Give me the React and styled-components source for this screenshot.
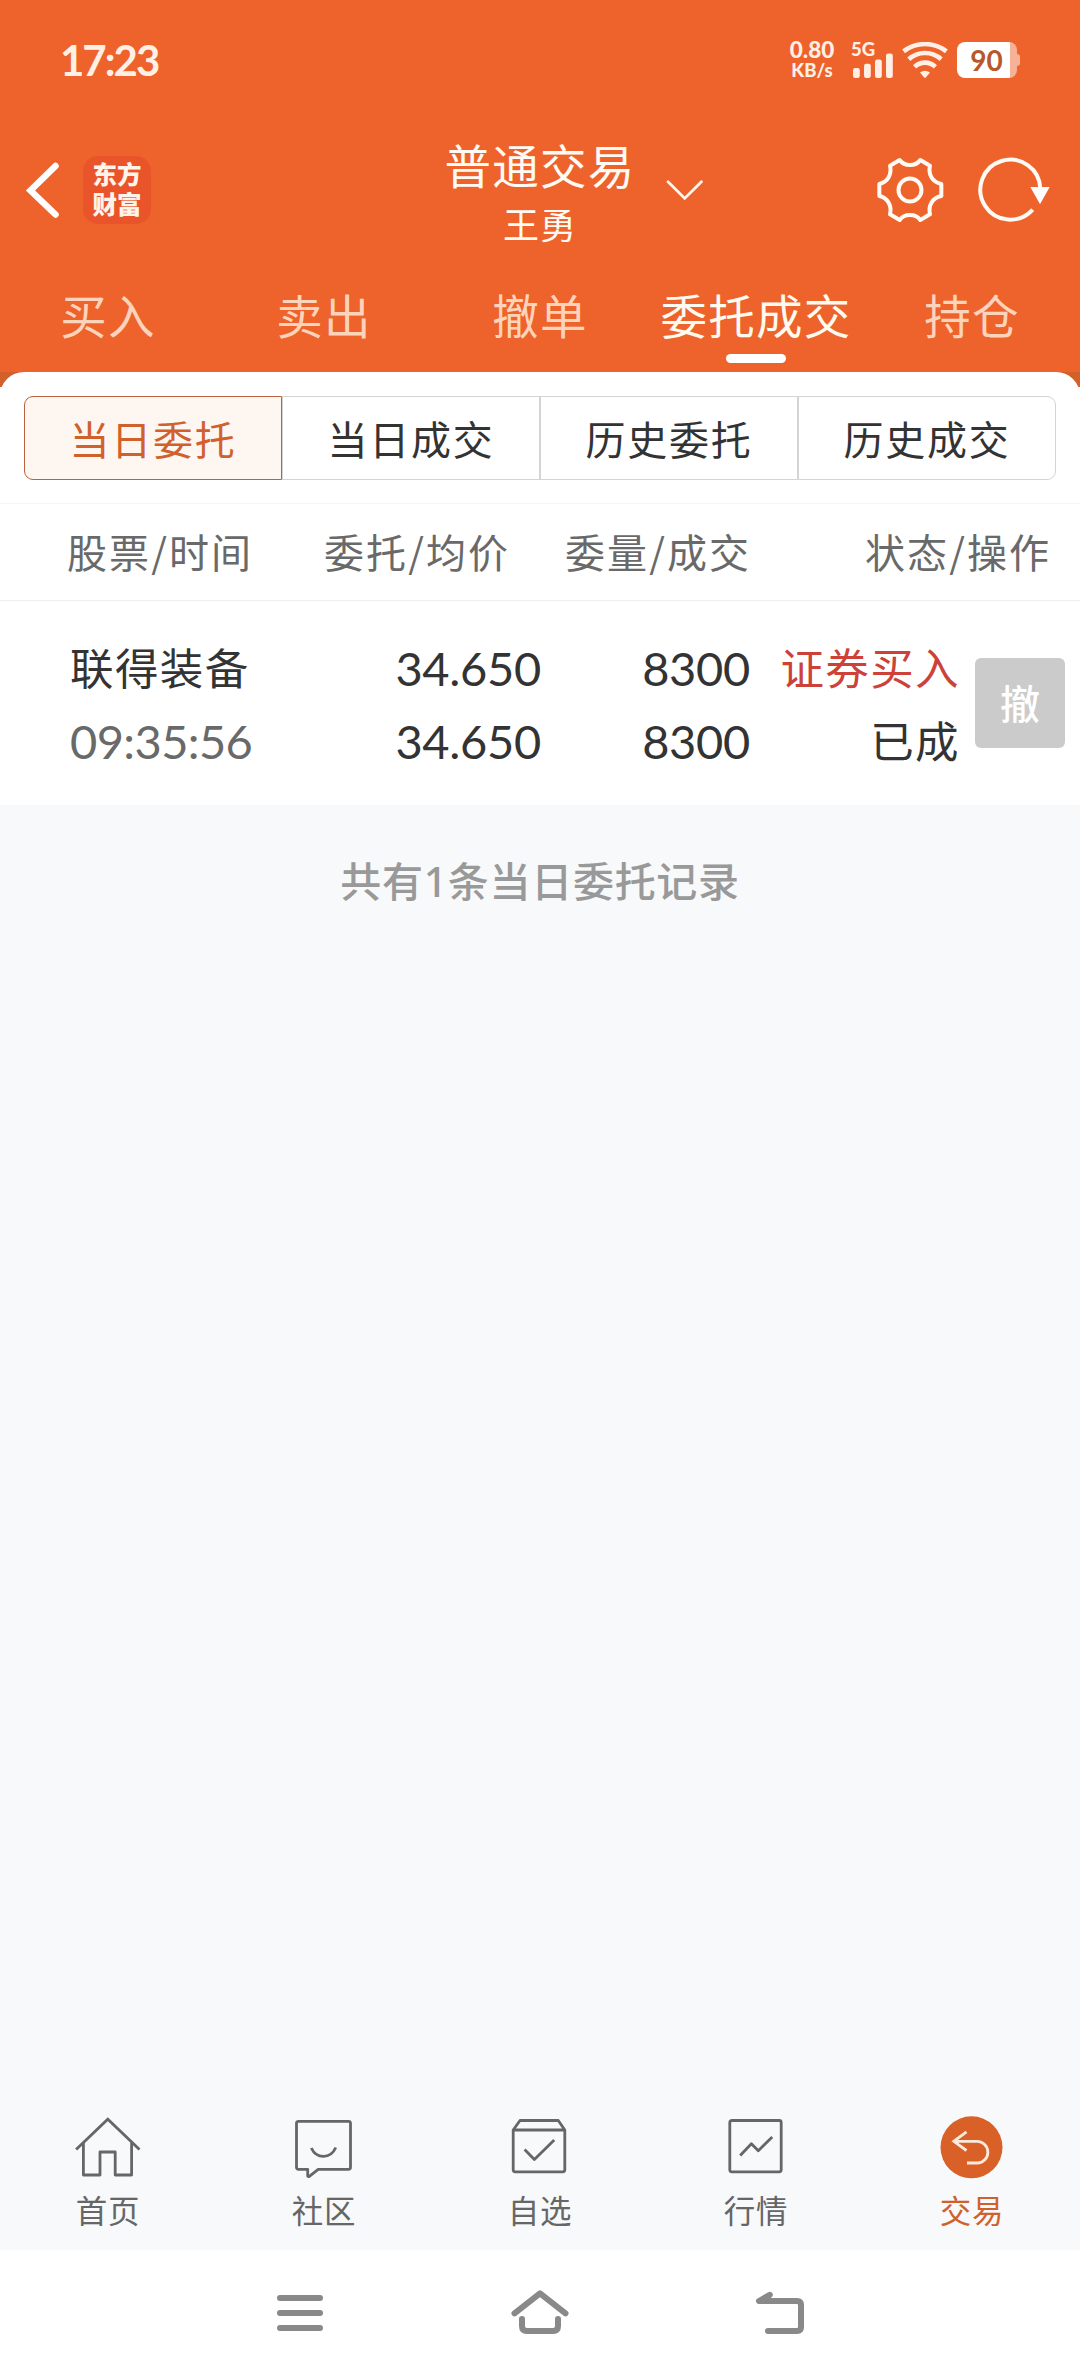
import React, { useState } from 'react';
import styled, { createGlobalStyle, ThemeProvider } from 'styled-components';

const theme = {
  colors: {
    primary: '#ed632b',
    primaryDark: '#d2602b',
    active: '#d0612d',
    activeBg: '#fdf6f1',
    text: '#333333',
    textLight: '#696969',
    muted: '#999999',
    buy: '#cc4238',
    page: '#f8f9fb',
    line: '#eeeeee',
  },
  fonts: {
    text: "'Noto Sans CJK SC', sans-serif",
    number: "Lato, 'Noto Sans CJK SC', sans-serif",
    mixed: "'Noto Sans', 'Noto Sans CJK SC', sans-serif",
  },
};

const GlobalStyle = createGlobalStyle`
  * {
    box-sizing: border-box;
  }

  body {
    margin: 0;
    background: ${theme.colors.page};
    font-family: ${theme.fonts.text};
    color: ${theme.colors.text};
  }

  button {
    margin: 0;
    padding: 0;
    border: 0;
    background: none;
    font: inherit;
    color: inherit;
  }

  svg {
    display: block;
    flex: none;
  }
`;

const Screen = styled.div`
  display: flex;
  flex-direction: column;
  width: 1080px;
  height: 2376px;
  overflow: hidden;
`;

const Header = styled.header`
  height: 372px;
  background: ${props => props.theme.colors.primary};
  color: #fffaf3;
`;

const StatusBar = styled.div`
  display: flex;
  align-items: center;
  height: 120px;
  padding: 0 60px;
  color: #ffefe5;
`;

const Clock = styled.span`
  font-family: ${props => props.theme.fonts.number};
  font-weight: 700;
  font-size: 42px;
  line-height: 50px;
  letter-spacing: -2px;
  margin-right: auto;
`;

const NetSpeed = styled.div`
  display: flex;
  flex-direction: column;
  align-items: center;
  width: 48px;
  margin-right: 15px;
  font-family: ${props => props.theme.fonts.number};
  font-weight: 900;
  line-height: 20px;
`;

const SpeedValue = styled.span`
  font-size: 22.5px;
`;

const SpeedUnit = styled.span`
  font-size: 18.5px;
`;

const Signal = styled.div`
  display: flex;
  flex-direction: column;
  width: 43px;
  height: 36px;
  margin-right: 8px;
`;

const SignalLabel = styled.span`
  height: 11px;
  font-family: ${props => props.theme.fonts.number};
  font-weight: 900;
  font-size: 18.5px;
  line-height: 14px;
`;

const Battery = styled.div`
  display: flex;
  align-items: center;
  margin-left: 9px;
`;

const BatteryBody = styled.div`
  display: flex;
  align-items: center;
  justify-content: center;
  width: 60px;
  height: 36px;
  padding-right: 1px;
  border-radius: 8px;
  background: linear-gradient(to right, #ffffff 53px, #f7b196 53px);
  color: #b9562b;
  font-family: ${props => props.theme.fonts.number};
  font-weight: 700;
  font-size: 28px;
  line-height: 34px;
`;

const BatteryTip = styled.div`
  width: 3px;
  height: 12px;
  border-radius: 0 3px 3px 0;
  background: #f7b196;
`;

const TitleBar = styled.div`
  display: grid;
  grid-template-columns: 1fr auto 1fr;
  height: 140px;
`;

const TitleLeft = styled.div`
  display: flex;
  align-items: center;
  gap: 23px;
  padding-left: 24px;
`;

const Logo = styled.div`
  display: grid;
  place-content: center;
  width: 68px;
  height: 68px;
  padding-bottom: 3px;
  border-radius: 15px;
  background: #ea542a;
  color: #fff3ea;
  font-weight: 900;
  font-size: 24.5px;
  line-height: 29.5px;
  text-align: center;
`;

const TitleCenter = styled.div`
  display: flex;
  flex-direction: column;
  align-items: center;
  gap: 7px;
  padding-top: 14px;
`;

const Title = styled.h1`
  margin: 0;
  font-weight: 400;
  font-size: 46.5px;
  line-height: 60px;
  letter-spacing: 1.3px;
`;

const Account = styled.span`
  font-size: 36px;
  line-height: 44px;
  letter-spacing: 1px;
`;

const TitleRight = styled.div`
  display: flex;
  align-items: center;
  padding: 0 29px 0 29px;
`;

const TitleActions = styled.div`
  display: flex;
  gap: 32px;
  margin-left: auto;
`;

const TradeTabs = styled.nav`
  display: grid;
  grid-template-columns: repeat(5, 1fr);
  height: 112px;
  padding-top: 24px;
`;

const TradeTab = styled.button`
  display: flex;
  flex-direction: column;
  align-items: center;
  gap: 10px;
  font-size: 46.5px;
  line-height: 60px;
  letter-spacing: 1.3px;
  white-space: nowrap;
  color: ${props => (props.$active ? '#fffaf0' : '#fdd3bb')};

  &::after {
    content: '';
    width: 60px;
    height: 9px;
    border-radius: 5px;
    background: ${props => (props.$active ? '#ffffff' : 'transparent')};
  }
`;

const SheetTop = styled.div`
  height: 15px;
  overflow: hidden;
  background: ${props => props.theme.colors.primaryDark};

  &::before {
    content: '';
    display: block;
    height: 30px;
    border-radius: 24px 24px 0 0;
    background: #ffffff;
  }
`;

const Sheet = styled.section`
  background: #ffffff;
`;

const Segments = styled.div`
  display: grid;
  grid-template-columns: repeat(4, 1fr);
  height: 116px;
  padding: 9px 24px 23px;
`;

const Segment = styled.button`
  border: 1px solid ${props => (props.$active ? '#b8623f' : '#d4d4d4')};
  background: ${props => (props.$active ? props.theme.colors.activeBg : '#ffffff')};
  color: ${props => (props.$active ? props.theme.colors.active : props.theme.colors.text)};
  font-size: 40px;
  line-height: 60px;
  letter-spacing: 1.8px;

  &:first-child {
    border-radius: 9px 0 0 9px;
  }

  &:last-child {
    border-radius: 0 9px 9px 0;
  }
`;

const Columns = styled.div`
  display: grid;
  grid-template-columns: 67px 257px 241px 300px 1fr;
  height: 98px;
  border-top: 1px solid #f5f5f5;
  border-bottom: 1px solid ${props => props.theme.colors.line};
  color: ${props => props.theme.colors.textLight};
  font-size: 40px;
  line-height: 95px;
  letter-spacing: 2.1px;
  white-space: nowrap;

  span:first-child {
    grid-column: 2;
  }
`;

const Order = styled.div`
  display: grid;
  grid-template-columns: 220px 251px 209px 209px 1fr;
  align-items: center;
  height: 204px;
  padding: 0 15px 0 70px;
`;

const Cell = styled.div`
  display: flex;
  flex-direction: column;
  align-items: ${props => (props.$left ? 'flex-start' : 'flex-end')};
  white-space: nowrap;
`;

const OrderText = styled.span`
  height: 73px;
  font-size: 43.5px;
  line-height: 73px;
  letter-spacing: 1.4px;
  margin-right: -1px;
  color: ${props => (props.$buy ? props.theme.colors.buy : props.theme.colors.text)};
`;

const OrderNumber = styled.span`
  height: 73px;
  font-family: ${props => props.theme.fonts.number};
  font-size: 47px;
  line-height: 76px;
  letter-spacing: ${props => (props.$time ? '-0.6px' : '-0.3px')};
  color: ${props => (props.$time ? props.theme.colors.textLight : props.theme.colors.text)};
`;

const CancelButton = styled.button`
  justify-self: end;
  width: 90px;
  height: 90px;
  padding-bottom: 3px;
  border-radius: 6px;
  background: #cbcbcb;
  color: #ffffff;
  font-size: 40px;
  font-weight: 500;
`;

const Summary = styled.p`
  flex: 1;
  margin: 0;
  padding-top: 48px;
  text-align: center;
  font-family: ${props => props.theme.fonts.mixed};
  font-size: 41px;
  font-weight: 500;
  line-height: 56px;
  letter-spacing: 0.7px;
  color: ${props => props.theme.colors.muted};
`;

const TabBar = styled.nav`
  display: grid;
  grid-template-columns: repeat(5, 1fr);
  height: 150px;
  padding-top: 12px;
`;

const TabItem = styled.button`
  display: flex;
  flex-direction: column;
  align-items: center;
  font-size: 31.5px;
  line-height: 50px;
  letter-spacing: 0.8px;
  color: ${props => (props.$active ? props.theme.colors.active : '#666666')};
`;

const SystemNav = styled.div`
  display: grid;
  grid-template-columns: repeat(3, 240px);
  justify-content: center;
  justify-items: center;
  height: 126px;
  padding-top: 27px;
  background: #ffffff;
`;

const LineIcon = ({ children }) => (
  <svg
    width="72"
    height="72"
    viewBox="0 0 72 72"
    fill="none"
    stroke="currentColor"
    strokeWidth="2.8"
    strokeLinejoin="round"
  >
    {children}
  </svg>
);

const HomeIcon = () => (
  <LineIcon>
    <path d="M4.1 37.5 35.8 7.3 67.5 37.5" strokeLinejoin="miter" />
    <path d="M11.4 31V63H28V40H43.2V63H59.6V31" />
  </LineIcon>
);

const CommunityIcon = () => (
  <LineIcon>
    <path d="M10.5 9.3H60.5Q62.5 9.3 62.5 11.3V55.3Q62.5 57.3 60.5 57.3H30.2L21 64.6Q19.7 65 19.7 63.5V57.3H10.5Q8.5 57.3 8.5 55.3V11.3Q8.5 9.3 10.5 9.3Z" />
    <path d="M23.3 36C28.5 47.3 42.5 47.3 47.8 35.5" />
  </LineIcon>
);

const WatchlistIcon = () => (
  <LineIcon>
    <path d="M9.2 18 16 8.5H54.3L60.8 18V57.8Q60.8 59.8 58.8 59.8H11.2Q9.2 59.8 9.2 57.8ZM9.2 18H60.8" />
    <path d="M20.6 37.5 30.4 47.5 50.2 28" />
  </LineIcon>
);

const MarketIcon = () => (
  <LineIcon>
    <rect x="9.8" y="8.5" width="51.4" height="51.3" rx="2" />
    <path d="M20.2 43.5 31.4 31.7 38.3 38.7 52.2 25" />
  </LineIcon>
);

const TradeIcon = () => (
  <LineIcon>
    <circle cx="35.5" cy="35.3" r="31" fill="#d96027" stroke="none" />
    <path
      d="M30.5 19.8 17.8 29.3 30.5 38.5M17.8 29.3H42A10.9 10.9 0 0 1 42 51H31"
      stroke="#fdeadd"
      strokeLinejoin="miter"
    />
  </LineIcon>
);

const SignalBars = () => (
  <svg width="43" height="25" viewBox="0 0 43 25" fill="currentColor">
    <rect x="2" y="15" width="6.8" height="10" rx="2.2" />
    <rect x="13" y="10.7" width="6.8" height="14.3" rx="2.2" />
    <rect x="24" y="6.5" width="6.8" height="18.5" rx="2.2" />
    <rect x="35" y="0.5" width="6.8" height="24.5" rx="2.2" />
  </svg>
);

const WifiIcon = () => (
  <svg width="46" height="36" viewBox="0 0 46 36" fill="none" stroke="currentColor" strokeWidth="4.6">
    <path d="M1.6 9.4C14 -0.4 32 -0.4 44.4 9.4" />
    <path d="M6.8 17.2C16 9 30 9 39.2 17.2" />
    <path d="M12.6 24.8C18.4 19.2 27.6 19.2 33.4 24.8" />
    <path d="M18 30.4Q23 27.2 28 30.4L23.8 35.4Q23 36 22.2 35.4Z" fill="currentColor" stroke="none" />
  </svg>
);

const BackIcon = () => (
  <svg width="36" height="60" viewBox="0 0 36 60" fill="none" stroke="#ffffff" strokeWidth="6.5" strokeLinecap="round">
    <path d="M31.5 6 6.5 30.5 31.5 54.5" />
  </svg>
);

const ChevronIcon = () => (
  <svg width="38" height="24" viewBox="0 0 38 24" fill="none" stroke="currentColor" strokeWidth="2.8" strokeLinecap="round">
    <path d="M3 3.8 19.7 20.4 36.4 3.8" />
  </svg>
);

const GearIcon = () => (
  <svg width="70" height="70" viewBox="46 45 210 210" fill="none" stroke="currentColor" strokeWidth="12" strokeLinejoin="round">
    <path d="M120 60C134 80 168 80 182 60L211 77C205 103 217 126 245 132V168C217 174 205 197 211 223L182 240C168 220 134 220 120 240L91 223C97 197 85 174 59 168V132C85 126 97 103 91 77Z" />
    <circle cx="151" cy="150" r="34.5" />
  </svg>
);

const RefreshIcon = () => (
  <svg width="74" height="70" viewBox="352 45 222 210" fill="none" stroke="currentColor" strokeWidth="12">
    <path d="M519 209A90 90 0 1 1 542 146" />
    <path d="M512 141H570L541 193Z" fill="#ffffff" stroke="none" />
  </svg>
);

const tradeTabs = ['买入', '卖出', '撤单', '委托成交', '持仓'];

const segments = ['当日委托', '当日成交', '历史委托', '历史成交'];

const orders = [
  {
    name: '联得装备',
    time: '09:35:56',
    price: '34.650',
    average: '34.650',
    amount: '8300',
    filled: '8300',
    side: '证券买入',
    status: '已成',
  },
];

const mainTabs = [
  { label: '首页', icon: HomeIcon },
  { label: '社区', icon: CommunityIcon },
  { label: '自选', icon: WatchlistIcon },
  { label: '行情', icon: MarketIcon },
  { label: '交易', icon: TradeIcon },
];

const App = () => {
  const [tradeTab, setTradeTab] = useState('委托成交');
  const [segment, setSegment] = useState('当日委托');
  const [mainTab, setMainTab] = useState('交易');

  return (
    <ThemeProvider theme={theme}>
      <GlobalStyle />
      <Screen>
        <Header>
          <StatusBar>
            <Clock>17:23</Clock>
            <NetSpeed>
              <SpeedValue>0.80</SpeedValue>
              <SpeedUnit>KB/s</SpeedUnit>
            </NetSpeed>
            <Signal>
              <SignalLabel>5G</SignalLabel>
              <SignalBars />
            </Signal>
            <WifiIcon />
            <Battery>
              <BatteryBody>90</BatteryBody>
              <BatteryTip />
            </Battery>
          </StatusBar>

          <TitleBar>
            <TitleLeft>
              <BackIcon />
              <Logo>
                <span>东方</span>
                <span>财富</span>
              </Logo>
            </TitleLeft>
            <TitleCenter>
              <Title>普通交易</Title>
              <Account>王勇</Account>
            </TitleCenter>
            <TitleRight>
              <ChevronIcon />
              <TitleActions>
                <GearIcon />
                <RefreshIcon />
              </TitleActions>
            </TitleRight>
          </TitleBar>

          <TradeTabs>
            {tradeTabs.map((tab) => (
              <TradeTab key={tab} $active={tab === tradeTab} onClick={() => setTradeTab(tab)}>
                {tab}
              </TradeTab>
            ))}
          </TradeTabs>
        </Header>

        <SheetTop />
        <Sheet>
          <Segments>
            {segments.map((item) => (
              <Segment key={item} $active={item === segment} onClick={() => setSegment(item)}>
                {item}
              </Segment>
            ))}
          </Segments>

          <Columns>
            <span>股票/时间</span>
            <span>委托/均价</span>
            <span>委量/成交</span>
            <span>状态/操作</span>
          </Columns>

          {orders.map((order) => (
            <Order key={order.time}>
              <Cell $left>
                <OrderText>{order.name}</OrderText>
                <OrderNumber $time>{order.time}</OrderNumber>
              </Cell>
              <Cell>
                <OrderNumber>{order.price}</OrderNumber>
                <OrderNumber>{order.average}</OrderNumber>
              </Cell>
              <Cell>
                <OrderNumber>{order.amount}</OrderNumber>
                <OrderNumber>{order.filled}</OrderNumber>
              </Cell>
              <Cell>
                <OrderText $buy>{order.side}</OrderText>
                <OrderText>{order.status}</OrderText>
              </Cell>
              <CancelButton>撤</CancelButton>
            </Order>
          ))}
        </Sheet>

        <Summary>共有{orders.length}条当日委托记录</Summary>

        <TabBar>
          {mainTabs.map(({ label, icon: Icon }) => (
            <TabItem key={label} $active={label === mainTab} onClick={() => setMainTab(label)}>
              <Icon />
              {label}
            </TabItem>
          ))}
        </TabBar>

        <SystemNav>
          <svg width="72" height="72" viewBox="264 2277 72 72" stroke="#898989" strokeWidth="6" strokeLinecap="round">
            <path d="M280 2298H320M280 2313H320M280 2328H320" />
          </svg>
          <svg width="72" height="72" viewBox="504 2277 72 72" fill="none" stroke="#898989" strokeWidth="6" strokeLinecap="round" strokeLinejoin="round">
            <path d="M514.5 2313.3 540 2293.3 565.5 2313.3" />
            <path d="M522 2319V2326Q522 2331 527 2331H553Q558 2331 558 2326V2319" />
          </svg>
          <svg width="72" height="72" viewBox="744 2277 72 72" fill="none" stroke="#898989" strokeWidth="6" strokeLinecap="round" strokeLinejoin="round">
            <path d="M769.8 2294.8 759 2301H797Q801 2301 801 2305V2327Q801 2331 797 2331H768" />
          </svg>
        </SystemNav>
      </Screen>
    </ThemeProvider>
  );
};

export default App;
